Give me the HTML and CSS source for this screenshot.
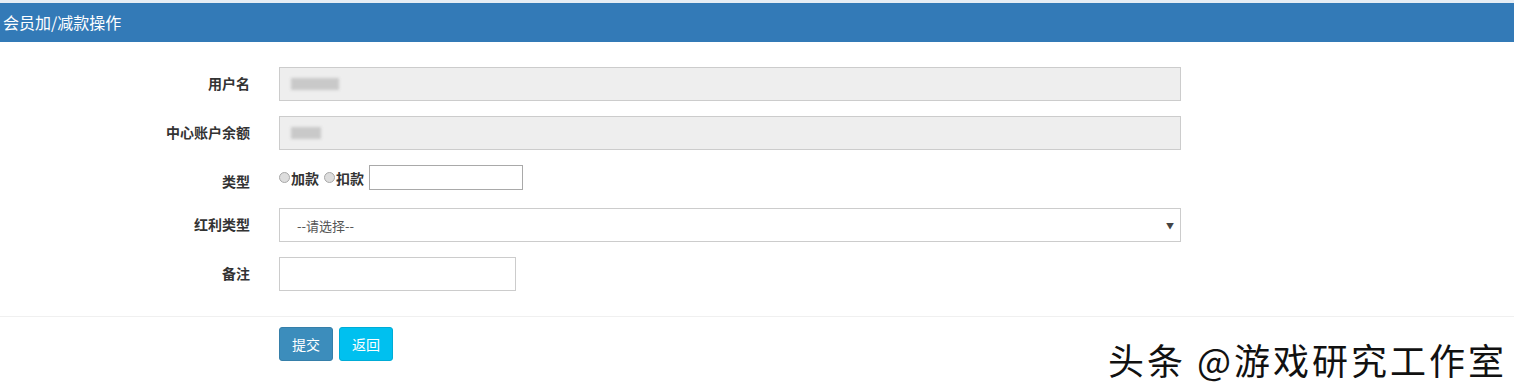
FILE: index.html
```html
<!DOCTYPE html>
<html lang="zh-CN">
<head>
    <meta charset="UTF-8">
    <meta name="viewport" content="width=device-width, initial-scale=1.0">
    <title>会员加/减款操作</title>
    <link rel="stylesheet" href="styles.css">
</head>
<body>
    <div class="top-line"></div>
    <div class="panel-heading">会员加/减款操作</div>

    <form class="edit-form">
        <div class="form-row">
            <label class="form-label">用户名</label>
            <div class="form-field">
                <div class="form-control readonly"><span class="masked masked-user"></span></div>
            </div>
        </div>
        <div class="form-row">
            <label class="form-label">中心账户余额</label>
            <div class="form-field">
                <div class="form-control readonly"><span class="masked masked-money"></span></div>
            </div>
        </div>
        <div class="form-row row-type">
            <label class="form-label">类型</label>
            <div class="form-field type-field">
                <label class="radio"><span class="radio-dot"></span>加款</label>
                <label class="radio"><span class="radio-dot"></span>扣款</label>
                <input type="text" class="amount">
            </div>
        </div>
        <div class="form-row">
            <label class="form-label">红利类型</label>
            <div class="form-field">
                <div class="form-control select">
                    <span>--请选择--</span>
                    <span class="caret">▼</span>
                </div>
            </div>
        </div>
        <div class="form-row">
            <label class="form-label">备注</label>
            <div class="form-field">
                <div class="form-control remark"></div>
            </div>
        </div>
    </form>

    <div class="divider"></div>

    <div class="actions">
        <button type="button" class="btn btn-primary">提交</button>
        <button type="button" class="btn btn-info">返回</button>
    </div>

    <div class="watermark">头条 @游戏研究工作室</div>
</body>
</html>
```

FILE: styles.css
```css
body {
    margin: 0;
    background: #fff;
    font-family: "Noto Sans CJK SC", "Noto Sans", sans-serif;
    font-size: 12px;
    color: #333;
    position: relative;
    height: 392px;
    overflow: hidden;
}
.top-line {
    height: 3px;
    background: #e6edf4;
}
.panel-heading {
    height: 39px;
    line-height: 38px;
    background: #337ab7;
    color: #fff;
    font-size: 16px;
    padding-left: 3px;
}
.edit-form {
    padding-top: 25px;
}
.form-row {
    display: flex;
    align-items: flex-start;
    margin-bottom: 15px;
}
.form-label {
    width: 250px;
    text-align: right;
    font-weight: bold;
    font-size: 14px;
    padding-top: 6px;
    line-height: 20px;
    color: #333;
}
.form-field {
    margin-left: 29px;
    width: 902px;
}
.form-control {
    box-sizing: border-box;
    height: 34px;
    border: 1px solid #ccc;
    background: #fff;
    display: flex;
    align-items: center;
    padding: 0 11px;
}
.readonly {
    background: #eee;
}
.masked {
    display: block;
    height: 12px;
    background: #c9c9c9;
    filter: blur(1.5px);
}
.masked-user {
    width: 48px;
}
.masked-money {
    width: 30px;
}
.row-type {
    height: 28px;
}
.type-field {
    display: flex;
    align-items: center;
    height: 25px;
}
.radio {
    display: flex;
    align-items: center;
    font-weight: bold;
    font-size: 14px;
    margin-right: 5px;
    color: #333;
}
.radio-dot {
    width: 9px;
    height: 9px;
    border-radius: 50%;
    border: 1px solid #a8a8a8;
    background: #ddd;
    margin-right: 1px;
}
.amount {
    box-sizing: border-box;
    width: 154px;
    height: 25px;
    border: 1px solid #a9a9a9;
    margin: 0;
    padding: 0;
}
.select {
    justify-content: space-between;
    padding-left: 17px;
    padding-right: 6px;
    color: #555;
    font-size: 13px;
}
.caret {
    font-size: 8px;
    color: #444;
}
.remark {
    width: 237px;
}
.divider {
    margin-top: 25px;
    height: 1px;
    background: #f0f0f0;
}
.actions {
    display: flex;
    gap: 6px;
    padding: 10px 0 0 279px;
}
.btn {
    width: 54px;
    height: 34px;
    border: 1px solid transparent;
    border-radius: 3px;
    color: #fff;
    font-family: "Noto Sans CJK SC", sans-serif;
    font-size: 14px;
    padding: 0;
    cursor: pointer;
}
.btn-primary {
    background: #3c8dbc;
    border-color: #367fa9;
}
.btn-info {
    background: #00c0ef;
    border-color: #00acd6;
}
.watermark {
    position: absolute;
    left: 1108px;
    top: 338px;
    font-size: 36px;
    line-height: 42px;
    color: #111;
    letter-spacing: 3px;
    text-shadow: 1px 1px 0 #fff, -1px -1px 0 #fff;
    white-space: nowrap;
}
```
